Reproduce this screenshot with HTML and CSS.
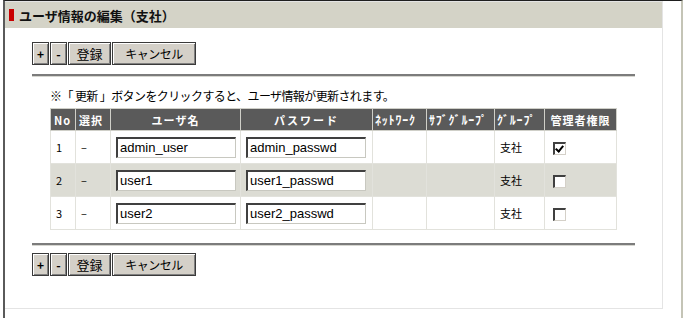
FILE: index.html
```html
<!DOCTYPE html>
<html lang="ja">
<head>
    <meta charset="UTF-8">
    <title>ユーザ情報の編集</title>
    <link rel="stylesheet" href="styles.css">
</head>
<body>
    <div class="page">
        <div class="panel">
            <div class="panel-head">
                <span class="mark"></span>
                <h1>ユーザ情報の編集（支社）</h1>
            </div>

            <div class="panel-body">
                <div class="btn-bar">
                    <button class="btn btn-sm">+</button>
                    <button class="btn btn-sm">-</button>
                    <button class="btn btn-save">登録</button>
                    <button class="btn btn-cancel">キャンセル</button>
                </div>

                <div class="rule"></div>

                <div class="content">
                    <p class="note">※「 更新 」ボタンをクリックすると、ユーザ情報が更新されます。</p>

                    <table class="users">
                        <colgroup>
                            <col style="width:25px">
                            <col style="width:35px">
                            <col style="width:130px">
                            <col style="width:132px">
                            <col style="width:54px">
                            <col style="width:68px">
                            <col style="width:50px">
                            <col style="width:72px">
                        </colgroup>
                        <thead>
                            <tr>
                                <th class="left">No</th>
                                <th class="left">選択</th>
                                <th>ユーザ名</th>
                                <th class="wide">パスワード</th>
                                <th class="kana">ﾈｯﾄﾜｰｸ</th>
                                <th class="kana">ｻﾌﾞｸﾞﾙｰﾌﾟ</th>
                                <th class="kana">ｸﾞﾙｰﾌﾟ</th>
                                <th>管理者権限</th>
                            </tr>
                        </thead>
                        <tbody>
                            <tr>
                                <td>1</td>
                                <td>–</td>
                                <td><input class="field" type="text" value="admin_user"></td>
                                <td><input class="field" type="text" value="admin_passwd"></td>
                                <td></td>
                                <td></td>
                                <td>支社</td>
                                <td class="check"><input class="box" type="checkbox" checked></td>
                            </tr>
                            <tr class="alt">
                                <td>2</td>
                                <td>–</td>
                                <td><input class="field" type="text" value="user1"></td>
                                <td><input class="field" type="text" value="user1_passwd"></td>
                                <td></td>
                                <td></td>
                                <td>支社</td>
                                <td class="check"><input class="box" type="checkbox"></td>
                            </tr>
                            <tr>
                                <td>3</td>
                                <td>–</td>
                                <td><input class="field" type="text" value="user2"></td>
                                <td><input class="field" type="text" value="user2_passwd"></td>
                                <td></td>
                                <td></td>
                                <td>支社</td>
                                <td class="check"><input class="box" type="checkbox"></td>
                            </tr>
                        </tbody>
                    </table>
                </div>

                <div class="rule rule-bottom"></div>

                <div class="btn-bar">
                    <button class="btn btn-sm">+</button>
                    <button class="btn btn-sm">-</button>
                    <button class="btn btn-save">登録</button>
                    <button class="btn btn-cancel">キャンセル</button>
                </div>
            </div>
        </div>
    </div>
</body>
</html>
```

FILE: styles.css
```css
body {
    margin: 0;
    padding: 0;
    font-family: "Noto Sans CJK JP", "Liberation Sans", sans-serif;
    font-size: 12px;
    color: #000;
    background-color: #fff;
}

.page {
    margin-left: 3px;
    width: 676px;
    height: 317px;
    border-top: 1px solid #1e1e1e;
    border-left: 2px solid #5a5a5a;
    border-right: 2px solid #c4c4b6;
}

.panel {
    width: 658px;
    height: 308px;
    box-sizing: border-box;
    border: 1px solid #e4e4e4;
    border-left: none;
}

.panel-head {
    display: flex;
    align-items: center;
    height: 26px;
    background-color: #d4d3c7;
}

.mark {
    width: 5px;
    height: 12px;
    margin-left: 4px;
    margin-right: 5px;
    background-color: #c80000;
}

.panel-head h1 {
    margin: 0;
    font-size: 13px;
    font-weight: bold;
    color: #111;
}

.panel-body {
    padding: 14px 0 0 27px;
}

.btn-bar {
    display: flex;
    gap: 1px;
}

.btn {
    height: 23px;
    padding: 0;
    font-family: "Noto Sans CJK JP", sans-serif;
    font-size: 12px;
    color: #000;
    background-color: #d4d0c8;
    border: 1px solid #3a3a3a;
    box-shadow: inset 1px 1px 0 #ffffff, inset -1px -1px 0 #808080;
}

.btn-sm {
    width: 17px;
    font-weight: bold;
}

.btn-save {
    width: 43px;
    font-size: 13px;
}

.btn-cancel {
    width: 84px;
    letter-spacing: -0.5px;
}

.rule {
    width: 603px;
    margin-top: 9px;
    border-top: 2px solid #7c7c7c;
    border-bottom: 1px solid #d6d6d0;
}

.rule-bottom {
    margin-top: 13px;
    margin-bottom: 7px;
}

.content {
    padding-left: 18px;
}

.note {
    margin: 11px 0 4px;
    line-height: 16px;
    font-size: 12px;
    letter-spacing: -0.6px;
}

.users {
    width: 566px;
    table-layout: fixed;
    border-collapse: collapse;
    border: 1px solid #e2e2dc;
}

.users th {
    height: 21px;
    padding: 0;
    font-size: 11px;
    font-weight: bold;
    color: #fff;
    letter-spacing: 1px;
    background-color: #5a5a5a;
    border: 1px solid #cfcfc8;
    white-space: nowrap;
}

.users th.left {
    text-align: left;
    padding-left: 3px;
}

.users th.wide {
    letter-spacing: 2px;
}

.users th.kana {
    font-size: 12px;
    letter-spacing: 0.8px;
    text-align: left;
    padding-left: 2px;
}

.users td {
    height: 32px;
    padding: 0 0 0 5px;
    font-size: 11px;
    border: 1px solid #e2e2dc;
}

.users tr.alt td {
    background-color: #dcdcd4;
}

.field {
    width: 120px;
    height: 21px;
    box-sizing: border-box;
    padding: 0 2px;
    font-family: "Liberation Sans", sans-serif;
    font-size: 13px;
    color: #000;
    background-color: #fff;
    border-style: solid;
    border-width: 2px 1px 1px 2px;
    border-color: #404040 #c8c8c0 #c8c8c0 #404040;
    outline: none;
}

.users td.check {
    padding-left: 8px;
}

.box {
    appearance: none;
    position: relative;
    width: 13px;
    height: 13px;
    margin: 0;
    vertical-align: middle;
    box-sizing: border-box;
    background-color: #fff;
    border-style: solid;
    border-width: 2px 1px 1px 2px;
    border-color: #404040 #d4d0c8 #d4d0c8 #404040;
}

.box:checked::after {
    content: "";
    position: absolute;
    left: 2px;
    top: 0px;
    width: 3px;
    height: 6px;
    border-right: 2px solid #000;
    border-bottom: 2px solid #000;
    transform: rotate(40deg);
}
```
